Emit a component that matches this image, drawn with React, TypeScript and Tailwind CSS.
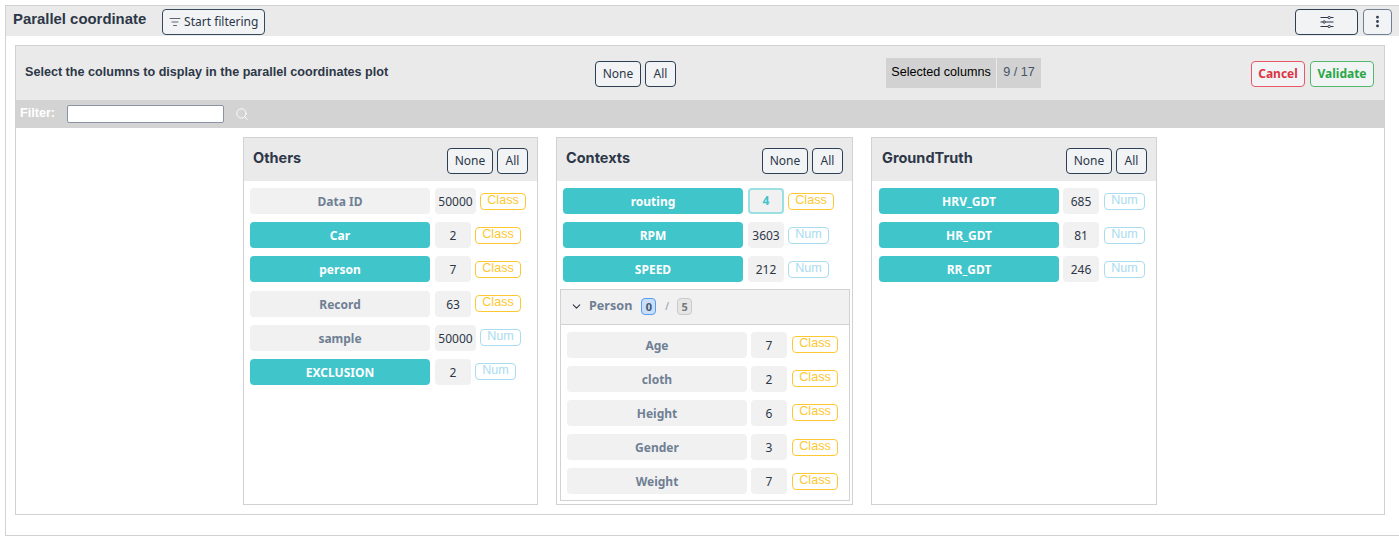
import React from "react";
import { ChevronDown, EllipsisVertical, ListFilter, Search } from "lucide-react";

function Btn({ children, className = "" }: { children: React.ReactNode; className?: string }) {
  return (
    <button className={`h-[26px] rounded-[4px] border border-[#2d3f55] bg-[#f1f3f5] text-[12px] text-[#2d3748] font-['Noto_Sans',sans-serif] flex items-center justify-center ${className}`}>
      {children}
    </button>
  );
}

function Tag({ kind }: { kind: string }) {
  const cls = kind === "Class" ? "w-[46px] border-[#fdc832] text-[#fdc832]" : "w-[41px] border-[#a9dcef] text-[#a9dcef]";
  return (
    <span className={`h-[17px] rounded-[4px] border flex justify-center text-[12.6px] leading-[13px] font-['Liberation_Sans',sans-serif] font-light ${cls}`}>
      {kind}
    </span>
  );
}

type R = { name: string; count: string; kind: string; on?: boolean; active?: boolean; wide?: boolean };

function Row({ r, className = "", countGap = "ml-[5px]", tagGap = "ml-[4px]" }: { r: R; className?: string; countGap?: string; tagGap?: string }) {
  return (
    <div className={`flex items-center h-[26px] mb-[8.2px] ${className}`}>
      <div className={`w-[180px] h-[26px] pt-[2px] rounded-[4px] flex items-center justify-center text-[12px] font-bold font-['Noto_Sans',sans-serif] ${r.on ? "bg-[#40c5cb] text-white" : "bg-[#f1f1f1] text-[#6f7f94]"}`}>
        {r.name}
      </div>
      <div className={`${countGap} h-[26px] rounded-[4px] flex items-center justify-center text-[12px] font-['Noto_Sans',sans-serif] ${r.wide ? "w-[41px]" : "w-[36px]"} ${r.active ? "border-2 border-[#9be0e3] bg-[#f1f1f1] text-[#40c5cb] font-bold" : "pt-[2px] bg-[#f1f1f1] text-[#2d3748]"}`}>
        {r.count}
      </div>
      <div className={tagGap}>
        <Tag kind={r.kind} />
      </div>
    </div>
  );
}

function Card({ title, width, pad, children }: { title: string; width: string; pad: string; children: React.ReactNode }) {
  return (
    <div className={`${width} h-[368px] border border-[#d2d2d2] flex flex-col`}>
      <div className={`h-[43px] shrink-0 bg-[#eaeaea] flex items-center justify-between ${pad}`}>
        <span className="text-[14.5px] font-bold text-[#2d3748] font-['Inter',sans-serif] -mt-[4px]">{title}</span>
        <div className="flex gap-[4px] mt-[2px]">
          <Btn className="w-[46px]">None</Btn>
          <Btn className="w-[31px]">All</Btn>
        </div>
      </div>
      <div className="flex-1 pt-[7px]">{children}</div>
    </div>
  );
}

const others: R[] = [
  { name: "Data ID", count: "50000", kind: "Class", wide: true },
  { name: "Car", count: "2", kind: "Class", on: true },
  { name: "person", count: "7", kind: "Class", on: true },
  { name: "Record", count: "63", kind: "Class" },
  { name: "sample", count: "50000", kind: "Num", wide: true },
  { name: "EXCLUSION", count: "2", kind: "Num", on: true },
];
const contexts: R[] = [
  { name: "routing", count: "4", kind: "Class", on: true, active: true },
  { name: "RPM", count: "3603", kind: "Num", on: true },
  { name: "SPEED", count: "212", kind: "Num", on: true },
];
const person: R[] = [
  { name: "Age", count: "7", kind: "Class" },
  { name: "cloth", count: "2", kind: "Class" },
  { name: "Height", count: "6", kind: "Class" },
  { name: "Gender", count: "3", kind: "Class" },
  { name: "Weight", count: "7", kind: "Class" },
];
const truth: R[] = [
  { name: "HRV_GDT", count: "685", kind: "Num", on: true },
  { name: "HR_GDT", count: "81", kind: "Num", on: true },
  { name: "RR_GDT", count: "246", kind: "Num", on: true },
];

export default function App() {
  return (
    <div className="h-[537px] w-[1399px] overflow-hidden bg-white pt-[5px] pl-[5px] pb-[1px]">
      <div className="h-full border-l border-t border-b border-[#d2d2d2] flex flex-col">
        <div className="h-[30px] shrink-0 bg-[#eaeaea] flex items-center pl-[7px] pr-[7px]">
          <span className="text-[14.9px] font-bold text-[#2d3748] font-['Liberation_Sans',sans-serif] -mt-[3px]">Parallel coordinate</span>
          <Btn className="ml-[16px] w-[103px] h-[25px] gap-[3px] mt-[1px] border-[#34495e]">
            <ListFilter size={12} strokeWidth={1.5} />
            <span>Start filtering</span>
          </Btn>
          <div className="ml-auto flex gap-[5px] mt-[1px]">
            <Btn className="w-[63px] h-[25px]">
              <svg width="14" height="12" viewBox="0 0 14 12" fill="none" stroke="#2d3748" strokeWidth="1">
                <path d="M0.5 1.5H8M10.5 1.5H13.5M0.5 6H3M5.5 6H13.5M0.5 10.5H8M10.5 10.5H13.5" />
                <circle cx="9.2" cy="1.5" r="1.2" />
                <circle cx="4.2" cy="6" r="1.2" />
                <circle cx="9.2" cy="10.5" r="1.2" />
              </svg>
            </Btn>
            <Btn className="w-[29px] h-[25px] border-[#6f7f94]">
              <EllipsisVertical size={15} strokeWidth={2.5} />
            </Btn>
          </div>
        </div>
        <div className="flex-1 pt-[9px] pl-[9px] pr-[14px] pb-[20px] bg-white">
          <div className="h-full border border-[#d2d2d2] flex flex-col">
            <div className="h-[54px] shrink-0 bg-[#eaeaea] flex items-center pl-[9px] pr-[10px]">
              <span className="w-[570px] -mt-[2px] text-[12.6px] font-bold text-[#2d3748] font-['Liberation_Sans',sans-serif]">Select the columns to display in the parallel coordinates plot</span>
              <div className="flex gap-[4px] mt-[1px]">
                <Btn className="w-[46px]">None</Btn>
                <Btn className="w-[31px]">All</Btn>
              </div>
              <div className="ml-[210px] h-[30px] -mt-[1px] flex gap-[1px] text-[12.6px] font-['Liberation_Sans',sans-serif] leading-[28px]">
                <span className="w-[110px] bg-[#d2d2d2] text-black text-center">Selected columns</span>
                <span className="w-[44px] bg-[#d2d2d2] text-[#44546a] text-center">9 / 17</span>
              </div>
              <div className="ml-auto flex gap-[5px] mt-[1px]">
                <button className="w-[54px] h-[26px] rounded-[4px] border border-[#e65a68] bg-[#f1f3f5] text-[12px] font-bold text-[#dc3545] font-['Noto_Sans',sans-serif]">Cancel</button>
                <button className="w-[64px] h-[26px] rounded-[4px] border border-[#52b96c] bg-[#f1f3f5] text-[12px] font-bold text-[#28a745] font-['Noto_Sans',sans-serif]">Validate</button>
              </div>
            </div>
            <div className="h-[28px] shrink-0 bg-[#d3d3d3] flex items-center pl-[4px]">
              <span className="w-[47px] -mt-[2px] text-[12.6px] font-bold text-white font-['Liberation_Sans',sans-serif]">Filter:</span>
              <input className="w-[157px] h-[18px] bg-white border border-[#8a93a3] rounded-[2px]" />
              <Search size={14} strokeWidth={1.5} className="ml-[11px] text-white" />
            </div>
            <div className="flex-1 flex justify-center gap-[18px] pt-[9px]">
              <Card title="Others" width="w-[295px]" pad="pl-[9px] pr-[9px]">
                {others.map((r) => <Row key={r.name} r={r} className="ml-[6px]" />)}
              </Card>
              <Card title="Contexts" width="w-[297px]" pad="pl-[9px] pr-[9px]">
                {contexts.map((r) => <Row key={r.name} r={r} className="ml-[6px]" />)}
                <div className="ml-[3px] mr-[2px] -mt-[1.6px] h-[212px] border border-[#d2d2d2]">
                  <div className="h-[35px] bg-[#f1f1f1] border-b border-[#d2d2d2] flex items-center pl-[9px] font-['Noto_Sans',sans-serif]">
                    <ChevronDown size={13} strokeWidth={2} className="text-[#2d3748]" />
                    <span className="ml-[6px] -mt-[2px] text-[12.6px] font-bold text-[#6f7f94]">Person</span>
                    <span className="ml-[9px] w-[15px] h-[17px] rounded-[4px] border border-[#5b9bf0] bg-[#c9defa] text-[11px] font-bold text-[#44546a] flex items-center justify-center">0</span>
                    <span className="ml-[9px] text-[10px] text-[#8a93a3]">/</span>
                    <span className="ml-[8px] w-[15px] h-[17px] rounded-[4px] border border-[#c9c9c9] bg-[#e6e6e6] text-[11px] font-bold text-[#777] flex items-center justify-center">5</span>
                  </div>
                  <div className="pt-[6.6px] pl-[6px]">
                    {person.map((r) => <Row key={r.name} r={r} countGap="ml-[4px]" tagGap="ml-[5px]" />)}
                  </div>
                </div>
              </Card>
              <Card title="GroundTruth" width="w-[286px]" pad="pl-[10px] pr-[9px]">
                {truth.map((r) => <Row key={r.name} r={r} className="ml-[7px]" countGap="ml-[4px]" tagGap="ml-[5px]" />)}
              </Card>
            </div>
          </div>
        </div>
      </div>
    </div>
  );
}
